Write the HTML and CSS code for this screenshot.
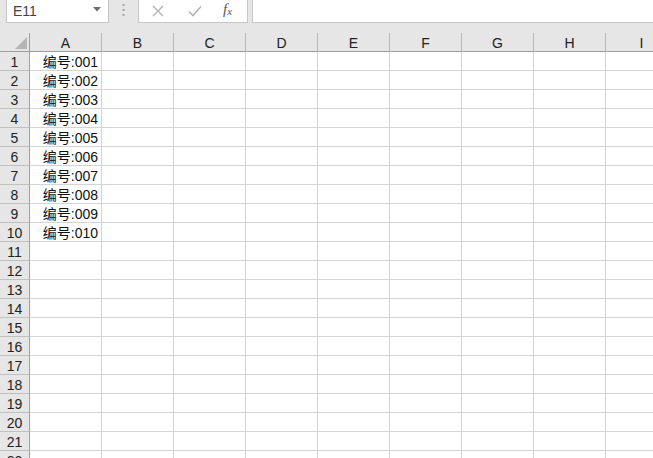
FILE: index.html
```html
<!DOCTYPE html>
<html lang="zh-CN">
<head>
    <meta charset="UTF-8">
    <title>Sheet1</title>
    <link rel="stylesheet" href="styles.css">
</head>
<body>
    <div class="toolbar">
        <div class="name-box">
            <span>E11</span>
            <svg class="drop-arrow" width="8" height="5" viewBox="0 0 8 5"><path d="M0 0 L8 0 L4 4.5 Z" fill="#6d6d6d"/></svg>
        </div>
        <div class="grip">
            <svg width="3" height="12" viewBox="0 0 3 12">
                <rect x="0.5" y="0" width="2" height="2" fill="#a6a6a6"/>
                <rect x="0.5" y="5" width="2" height="2" fill="#a6a6a6"/>
                <rect x="0.5" y="10" width="2" height="2" fill="#a6a6a6"/>
            </svg>
        </div>
        <div class="fx-buttons">
            <svg class="btn-icon" width="12" height="12" viewBox="0 0 12 12"><path d="M1 1 L11 11 M11 1 L1 11" stroke="#b3b3b3" stroke-width="1.4"/></svg>
            <svg class="btn-icon" width="14" height="12" viewBox="0 0 14 12"><path d="M1 6.5 L5 10.5 L13 1.5" stroke="#b3b3b3" stroke-width="1.6" fill="none"/></svg>
            <span class="fx">f<sub>x</sub></span>
        </div>
        <div class="formula-input"></div>
    </div>

    <div class="sheet" id="sheet"></div>

    <script>
        const sheet = document.getElementById('sheet');
        const cols = ['A', 'B', 'C', 'D', 'E', 'F', 'G', 'H', 'I'];

        const corner = document.createElement('div');
        corner.className = 'cell corner';
        corner.innerHTML = '<svg width="12" height="12" viewBox="0 0 12 12"><path d="M12 0 L12 12 L0 12 Z" fill="#b5b5b5"/></svg>';
        sheet.appendChild(corner);

        cols.forEach(c => {
            const head = document.createElement('div');
            head.className = 'cell col-head';
            head.textContent = c;
            sheet.appendChild(head);
        });

        for (let r = 1; r <= 22; r++) {
            const rowHead = document.createElement('div');
            rowHead.className = 'cell row-head';
            rowHead.textContent = r;
            sheet.appendChild(rowHead);

            cols.forEach((c, i) => {
                const cell = document.createElement('div');
                cell.className = 'cell';
                if (i === 0 && r <= 10) {
                    cell.classList.add('value');
                    cell.textContent = '编号:' + String(r).padStart(3, '0');
                }
                sheet.appendChild(cell);
            });
        }
    </script>
</body>
</html>
```

FILE: styles.css
```css
body {
    margin: 0;
    overflow: hidden;
    background-color: #fff;
    font-family: "Liberation Sans", "Noto Sans CJK SC", sans-serif;
    color: #222;
}

.toolbar {
    height: 33px;
    display: flex;
    align-items: flex-start;
    background-color: #e6e6e6;
}

.name-box {
    box-sizing: border-box;
    width: 103px;
    height: 23px;
    margin-left: 6px;
    padding: 0 7px 0 6px;
    display: flex;
    align-items: center;
    justify-content: space-between;
    background-color: #fff;
    border: 1px solid #c6c6c6;
    border-top: none;
    font-size: 14px;
    color: #444;
}

.drop-arrow {
    margin-top: -4px;
}

.grip {
    width: 29px;
    height: 20px;
    display: flex;
    align-items: center;
    justify-content: center;
}

.fx-buttons {
    box-sizing: border-box;
    width: 110px;
    height: 23px;
    display: flex;
    align-items: center;
    padding: 0 0 0 13px;
    background-color: #fff;
    border: 1px solid #c6c6c6;
    border-top: none;
}

.btn-icon {
    margin-right: 24px;
}

.btn-icon + .btn-icon {
    margin-right: 21px;
}

.fx {
    font-family: "Liberation Serif", serif;
    font-style: italic;
    font-size: 15px;
    color: #555;
    margin-top: -3px;
}

.fx sub {
    font-size: 11px;
    vertical-align: -1px;
}

.formula-input {
    flex: 1;
    height: 23px;
    margin-left: 4px;
    box-sizing: border-box;
    background-color: #fff;
    border: 1px solid #c6c6c6;
    border-top: none;
    border-right: none;
}

.sheet {
    display: grid;
    grid-template-columns: 30px repeat(9, 72px);
    grid-auto-rows: 19px;
}

.cell {
    box-sizing: border-box;
    border-right: 1px solid #d4d4d4;
    border-bottom: 1px solid #d4d4d4;
    padding: 1px 3px 0;
    font-size: 14px;
    line-height: 18px;
    white-space: nowrap;
    overflow: hidden;
}

.corner {
    display: flex;
    align-items: flex-end;
    justify-content: flex-end;
    padding: 0 2px 2px 0;
    background-color: #e6e6e6;
    border-right: 1px solid #9e9e9e;
    border-bottom: 1px solid #9e9e9e;
}

.col-head {
    text-align: center;
    background-color: #e6e6e6;
    border-right-color: #b8b8b8;
    border-bottom: 1px solid #9e9e9e;
}

.row-head {
    text-align: center;
    padding: 1px 0 0;
    background-color: #e6e6e6;
    border-right: 1px solid #9e9e9e;
    border-bottom-color: #c0c0c0;
}

.value {
    text-align: right;
    color: #111;
}
```
